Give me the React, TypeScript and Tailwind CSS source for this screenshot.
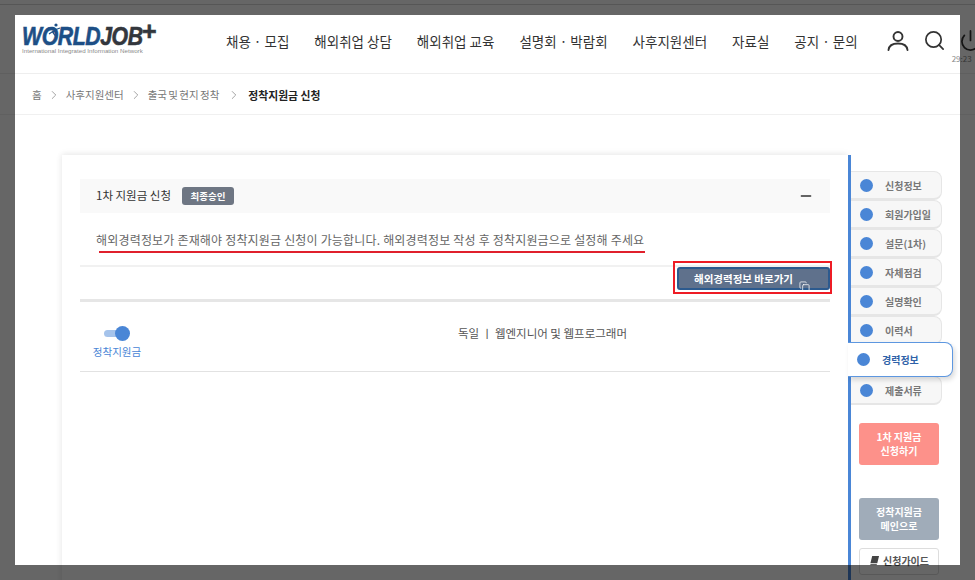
import { ChevronRight, Copy, Minus, Power, Search } from "lucide-react";

const navItems = [
  "채용 · 모집",
  "해외취업 상담",
  "해외취업 교육",
  "설명회 · 박람회",
  "사후지원센터",
  "자료실",
  "공지 · 문의",
];

const steps = ["신청정보", "회원가입일", "설문(1차)", "자체점검", "실명확인", "이력서"];

function Logo() {
  return (
    <div className="relative w-[136px] font-['Liberation_Sans',sans-serif]">
      <div className="flex h-[20px] items-start">
        <div className="flex w-[120px] origin-left scale-x-[0.85] text-[25px] font-black italic leading-[20px] tracking-[-0.5px] [-webkit-text-stroke:0.6px]">
          <span className="text-[#1d4f86]">WORLD</span>
          <span className="text-[#33373d]">JOB</span>
        </div>
        <span className="mt-[-5px] text-[25px] font-black leading-[20px] text-[#33373d] [-webkit-text-stroke:0.6px]">+</span>
      </div>
      <p className="mt-[1px] whitespace-nowrap text-[6.2px] leading-[7px] text-[#8a8a8a]">
        International Integrated Information Network
      </p>
      {/* little runner on the O */}
      <svg viewBox="0 0 16 14" className="absolute left-[23px] top-[-3px] h-[14px] w-[16px]" fill="none">
        <circle cx="11" cy="2" r="1.6" fill="#1d4f86" />
        <path d="M3 5.5 8 4.5l3 2-3 3 2 3M8.500 8 4 11M11 6.500 15 5" stroke="#1d4f86" strokeWidth="1.3" />
      </svg>
    </div>
  );
}

function StepTab({ label }: { label: string }) {
  return (
    <div className="flex h-[29px] w-[91px] items-center rounded-r-lg border-r border-b-2 border-t border-[#e6e6e6] bg-[#f7f7f7] pl-[9px]">
      <span className="h-[13px] w-[13px] shrink-0 rounded-full bg-[#4a86d6]" />
      <span className="ml-[12px] whitespace-nowrap text-[10px] font-bold text-[#777]">{label}</span>
    </div>
  );
}

export default function App() {
  return (
    <div className="relative h-[580px] w-[975px] overflow-hidden bg-white font-['Noto_Sans_CJK_KR','Noto_Sans',sans-serif] text-[#333]">
      <div className="h-[5px] border-b border-[#d8d8d8]" />

      <header className="flex h-[69px] items-start border-b border-[#eee] pl-[22px]">
        <div className="mt-[21px]">
          <Logo />
        </div>
        <nav className="ml-[68px] mt-[24px] flex gap-[25px] whitespace-nowrap text-[13.5px] leading-[24px] text-[#333]">
          {navItems.map((item) => (
            <span key={item}>{item}</span>
          ))}
        </nav>
        <div className="ml-[28px] mt-[24px] flex gap-[13px] text-[#333]">
          <svg viewBox="0 0 24 24" className="h-[24px] w-[24px]" fill="none" stroke="currentColor" strokeWidth="1.9" strokeLinecap="round">
            <circle cx="12" cy="7.500" r="4.500" />
            <path d="M2.500 21c.5-4.500 4.500-6.500 9.500-6.500s9 2 9.500 6.500" />
          </svg>
          <Search size={23} strokeWidth={1.8} />
          <div className="relative">
            <Power size={23} strokeWidth={1.8} />
            <span className="absolute left-[-7px] top-[25px] text-[8px] leading-[10px] text-[#888]">29:23</span>
          </div>
        </div>
      </header>

      <div className="flex h-[41px] items-center gap-[5px] border-b border-[#f0f0f0] pl-[32px] pt-[2px] text-[10.5px] text-[#777]">
        <span>홈</span>
        <ChevronRight size={14} strokeWidth={1.3} className="text-[#888]" />
        <span>사후지원센터</span>
        <ChevronRight size={14} strokeWidth={1.3} className="text-[#888]" />
        <span className="[word-spacing:-1px]">출국 및 현지 정착</span>
        <ChevronRight size={14} strokeWidth={1.3} className="ml-[3px] text-[#888]" />
        <span className="ml-[2px] text-[10.800px] font-bold text-[#222]">정착지원금 신청</span>
      </div>

      <main className="flex pl-[62px] pt-[40px]">
        <section className="h-[500px] w-[786px] px-[18px] pt-[24px] shadow-[0_-2px_6px_rgba(0,0,0,0.06),-2px_0_6px_rgba(0,0,0,0.04)]">
          <div className="flex h-[34px] items-center bg-[#f9f9f9] px-[16px]">
            <span className="text-[11.500px] text-[#333]">1차 지원금 신청</span>
            <span className="ml-[11px] flex h-[18px] w-[52px] items-center justify-center rounded-[3px] bg-[#6e7683] text-[9.500px] font-bold text-white">
              최종승인
            </span>
            <Minus size={16} strokeWidth={2} className="ml-auto text-[#333]" />
          </div>

          <p className="mt-[16px] h-[38px] whitespace-nowrap border-b-2 border-[#f1f1f1] pl-[16px] text-[12px] leading-[22px] tracking-[0.015em] text-[#666]">
            해외경력정보가 존재해야 정착지원금 신청이 가능합니다. 해외경력정보 작성 후 정착지원금으로 설정해 주세요
          </p>

          <div className="flex h-[32px] items-start justify-end">
            <button className="relative h-[23px] w-[153px] rounded-[3px] border-2 border-[#2c5a8e] bg-[#5f718c] pr-[20px] text-[10.500px] font-bold leading-[17px] text-white">
              해외경력정보 바로가기
              <Copy size={11} strokeWidth={1.6} className="absolute bottom-[-4px] right-[18px] text-white" />
            </button>
          </div>

          <div className="h-[3px] bg-[#e6e6e6]" />

          <div className="flex h-[70px] border-b border-[#e2e2e2]">
            <div className="flex w-[74px] flex-col items-center pt-[24px]">
              <div className="flex h-[15px] items-center">
                <span className="h-[7px] w-[16px] rounded-full bg-[#a5c3eb]" />
                <span className="ml-[-5px] h-[15px] w-[15px] rounded-full bg-[#4a86d6]" />
              </div>
              <span className="mt-[3px] whitespace-nowrap text-[10.500px] leading-[16px] text-[#4a86d6]">정착지원금</span>
            </div>
            <p className="ml-[304px] mt-[21px] whitespace-nowrap text-[11.500px] leading-[20px] text-[#555]">
              독일 ㅣ 웹엔지니어 및 웹프로그래머
            </p>
          </div>
        </section>

        <aside className="h-[500px] w-[127px] border-l-[3px] border-[#4a86d6] pt-[16px]">
          {steps.map((step) => (
            <StepTab key={step} label={step} />
          ))}
          <div className="relative z-10 ml-[-3px] mt-[-3px] flex h-[35px] w-[105px] items-center rounded-r-lg border border-l-0 border-[#5d97e0] bg-white pl-[9px] shadow-[2px_3px_5px_rgba(0,0,0,0.14)]">
            <span className="h-[13px] w-[13px] rounded-full bg-[#4a86d6]" />
            <span className="ml-[12px] text-[10px] font-bold text-[#2f62a8]">경력정보</span>
          </div>
          <div className="mt-[-1px]">
            <StepTab label="제출서류" />
          </div>

          <button className="ml-[8px] mt-[18px] block h-[42px] w-[80px] rounded-[3px] bg-[#fd918a] text-[10px] font-bold leading-[14px] text-white">
            1차 지원금
            <br />
            신청하기
          </button>
          <button className="ml-[8px] mt-[33px] block h-[42px] w-[80px] rounded-[3px] bg-[#a0acb9] text-[10px] font-bold leading-[14px] text-white">
            정착지원금
            <br />
            메인으로
          </button>
          <button className="ml-[8px] mt-[8px] flex h-[27px] w-[80px] items-center justify-center gap-[3px] rounded-[3px] border border-[#ddd] bg-white pb-[3px] text-[10px] font-bold text-[#555]">
            <svg viewBox="0 0 12 12" className="h-[11px] w-[11px]" fill="#444">
              <path d="M3.500 1H11L9 9H1.500Z" />
              <path d="M1.500 10H8.500V11H1.500Z" />
            </svg>
            신청가이드
          </button>
        </aside>
      </main>

      {/* red annotation marks */}
      <div className="absolute left-[99px] top-[251px] h-[1.5px] w-[546px] bg-[#e0202c]" />
      <div className="absolute left-[673px] top-[261px] h-[33px] w-[159px] border-2 border-[#ee1c25]" />

      {/* dim mask round the highlighted area */}
      <div className="absolute inset-x-0 top-0 z-20 h-[15px] bg-black/60" />
      <div className="absolute inset-x-0 top-[565px] z-20 h-[15px] bg-black/60" />
      <div className="absolute left-0 top-[15px] z-20 h-[550px] w-[15px] bg-black/60" />
      <div className="absolute left-[960px] top-[15px] z-20 h-[550px] w-[15px] bg-black/60" />
    </div>
  );
}
